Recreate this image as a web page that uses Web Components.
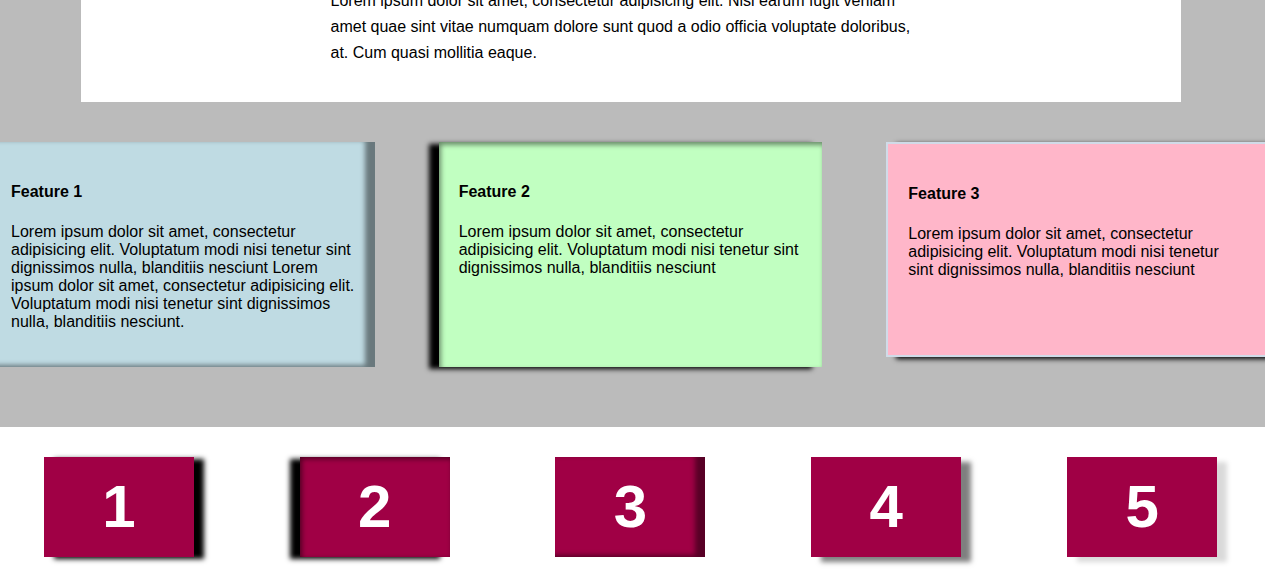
<!DOCTYPE html>
<html lang="en">
<head>
<meta charset="utf-8">
<title>Features</title>
<style>
  body {
    margin: 0;
    overflow: hidden;
    background: #fff;
    color: #000;
    font: 16px/18px "Liberation Sans", Arial, sans-serif;
  }
</style>
</head>
<body>
<feature-page></feature-page>

<template id="page-template">
  <style>
    :host { display: block; margin: -12px -5px 0 -9px; }
    .band { background: #bbb; padding-bottom: 60px; }
    .features { display: flex; justify-content: space-between; margin-top: 40px; }
    .tiles { display: flex; justify-content: space-around; padding: 30px 0; }
  </style>
  <main>
    <section class="band">
      <intro-panel>Lorem ipsum dolor sit amet, consectetur adipisicing elit. Nisi earum fugit veniam amet quae sint vitae numquam dolore sunt quod a odio officia voluptate doloribus, at. Cum quasi mollitia eaque.</intro-panel>
      <div class="features">
        <feature-card tone="blue"><span slot="title">Feature 1</span>Lorem ipsum dolor sit amet, consectetur adipisicing elit. Voluptatum modi nisi tenetur sint dignissimos nulla, blanditiis nesciunt Lorem ipsum dolor sit amet, consectetur adipisicing elit. Voluptatum modi nisi tenetur sint dignissimos nulla, blanditiis nesciunt.</feature-card>
        <feature-card tone="green"><span slot="title">Feature 2</span>Lorem ipsum dolor sit amet, consectetur adipisicing elit. Voluptatum modi nisi tenetur sint dignissimos nulla, blanditiis nesciunt</feature-card>
        <feature-card tone="pink"><span slot="title">Feature 3</span>Lorem ipsum dolor sit amet, consectetur adipisicing elit. Voluptatum modi nisi tenetur sint dignissimos nulla, blanditiis nesciunt</feature-card>
      </div>
    </section>
    <section class="tiles">
      <number-tile shade="right">1</number-tile>
      <number-tile shade="left">2</number-tile>
      <number-tile shade="inset">3</number-tile>
      <number-tile shade="half">4</number-tile>
      <number-tile shade="faint">5</number-tile>
    </section>
  </main>
</template>

<template id="intro-template">
  <style>
    :host { display: block; box-sizing: border-box; max-width: 1100px; margin: 0 auto; padding-bottom: 36px; background: #fff; }
    p { max-width: 600px; margin: 0 auto; line-height: 26px; }
  </style>
  <p><slot></slot></p>
</template>

<template id="card-template">
  <style>
    :host { display: block; box-sizing: border-box; width: 30%; padding: 20px; }
    :host([tone="blue"]) { background: #bfdbe3; box-shadow: inset -10px -2px 5px rgba(0, 0, 0, .45); }
    :host([tone="green"]) { background: #c1ffc1; box-shadow: -10px 2px 5px #000, inset 2px 3px 5px rgba(0, 0, 0, .45); }
    :host([tone="pink"]) { background: #ffb6c9; border: 2px solid #d0dbe8; margin-bottom: 10px; box-shadow: 10px 2px 5px #000; }
    h4 { margin: 21px 0 22px; font-size: 16px; }
    p { margin: 0 0 16px; }
  </style>
  <h4><slot name="title"></slot></h4>
  <p><slot></slot></p>
</template>

<template id="tile-template">
  <style>
    :host { display: flex; align-items: center; justify-content: center; width: 150px; height: 100px; background: #a00045; color: #fff; font-size: 60px; line-height: 64px; font-weight: bold; }
    :host([shade="right"]) { box-shadow: 10px 2px 5px #000; }
    :host([shade="left"]) { box-shadow: -10px 2px 5px #000, inset 2px 2px 5px rgba(0, 0, 0, .5); }
    :host([shade="inset"]) { box-shadow: inset -10px -2px 5px rgba(0, 0, 0, .45); }
    :host([shade="half"]) { box-shadow: 10px 5px 5px rgba(0, 0, 0, .5); }
    :host([shade="faint"]) { box-shadow: 10px 5px 5px rgba(0, 0, 0, .15); }
  </style>
  <slot></slot>
</template>

<script>
  const fromTemplate = id => class extends HTMLElement {
    constructor() {
      super();
      this.attachShadow({ mode: "open" })
        .append(document.getElementById(id).content.cloneNode(true));
    }
  };
  customElements.define("intro-panel", class extends fromTemplate("intro-template") {});
  customElements.define("feature-card", class extends fromTemplate("card-template") {});
  customElements.define("number-tile", class extends fromTemplate("tile-template") {});
  customElements.define("feature-page", class extends fromTemplate("page-template") {});
</script>
</body>
</html>
